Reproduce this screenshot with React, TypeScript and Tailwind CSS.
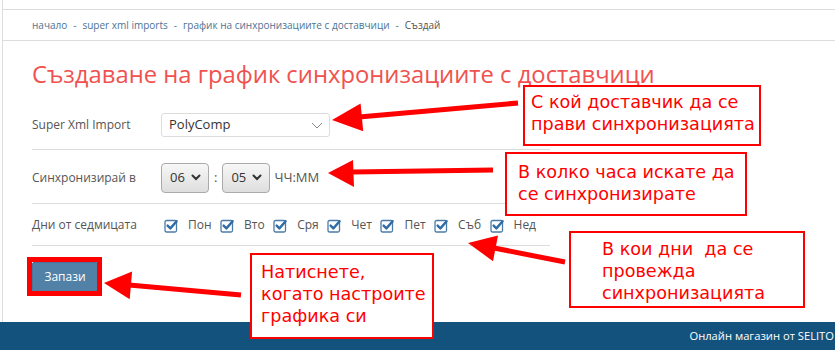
const days = ["Пон", "Вто", "Сря", "Чет", "Пет", "Съб", "Нед"];

function CheckIcon() {
  return (
    <svg width="15" height="15" viewBox="0 0 15 15" className="shrink-0">
      <rect x="1" y="2.5" width="11.5" height="11.5" rx="1.5" fill="#fff" stroke="#4a7ba6" strokeWidth="1.3" />
      <path d="M3.6 7.6 L6.4 10.4 L12.6 3.2" fill="none" stroke="#2f6ca8" strokeWidth="2.4" strokeLinecap="round" strokeLinejoin="round" />
    </svg>
  );
}

function Chevron() {
  return (
    <svg width="10" height="7" viewBox="0 0 10 7">
      <path d="M1.5 1.5 L5 5 L8.5 1.5" fill="none" stroke="#333" strokeWidth="2" strokeLinecap="round" />
    </svg>
  );
}

function TimeSelect({ value }: { value: string }) {
  return (
    <div className="flex h-[30px] w-[48px] items-center justify-between rounded-[4px] border border-[#aaa] bg-gradient-to-b from-[#f7f7f7] to-[#dedede] pl-[8px] pr-[7px] text-[13px] text-[#333]">
      <span>{value}</span>
      <Chevron />
    </div>
  );
}

type Note = { id: string; cls: string; lines: string[] };

function Arrows() {
  const heads = [
    { line: "M359 117 L518 103", head: "332,120 360.6,103.4 363.2,131.2" },
    { line: "M352 172 L493 170", head: "328,173 353,160 354,187" },
    { line: "M494 248 L565 262", head: "468,243 498,235.6 493,261.2" },
    { line: "M129 285 L241 295", head: "104,283 132.1,271.4 129.7,299.2" },
  ];
  return (
    <svg className="pointer-events-none absolute inset-0" width="835" height="350">
      {heads.map((a) => (
        <g key={a.head}>
          <path d={a.line} stroke="#f00" strokeWidth="5" />
          <polygon points={a.head} fill="#f00" />
        </g>
      ))}
    </svg>
  );
}

export default function App() {
  const notes: Note[] = [
    { id: "1", cls: "left-[523px] top-[85px] h-[61px] w-[238px] pl-[6px] pt-[4px]", lines: ["С кой доставчик да се", "прави синхронизацията"] },
    { id: "2", cls: "left-[505px] top-[152px] h-[64px] w-[242px] pl-[11px] pt-[7px]", lines: ["В колко часа искате да", "се синхронизирате"] },
    { id: "3", cls: "left-[569px] top-[231px] h-[77px] w-[236px] pl-[31px] pt-[5px]", lines: ["В кои дни\u00a0 да се", "провежда", "синхронизацията"] },
    { id: "4", cls: "left-[250px] top-[253px] h-[86px] w-[184px] pl-[9px] pt-[6px]", lines: ["Натиснете,", "когато настроите", "графика си"] },
  ];

  return (
    <div className="relative h-[350px] w-[835px] overflow-hidden bg-white font-['Open_Sans',sans-serif]">
      <div className="ml-[2px] h-[322px] border-l border-[#ddd] pt-[9px]">
        <div className="flex h-[32px] items-center border-y border-[#ddd] pl-[29px] text-[10px] text-[#4e7394]">
          <span>начало</span>
          <span className="mx-[6px]">-</span>
          <span>super xml imports</span>
          <span className="mx-[6px]">-</span>
          <span>график на синхронизациите с доставчици</span>
          <span className="mx-[6px]">-</span>
          <span className="text-[#555]">Създай</span>
        </div>

        <div className="pl-[29px]">
          <h1 className="mt-[18px] h-[45px] text-[23.8px] font-normal leading-[30px] text-[#f0524f]">
            Създаване на график синхронизациите с доставчици
          </h1>

          <div className="w-[518px] text-[12px] text-[#555]">
            <div className="flex h-[46px] items-center border-b border-[#ddd] pb-[3px]">
              <span className="w-[129px]">Super Xml Import</span>
              <div className="flex h-[24px] w-[169px] items-center justify-between rounded-[3px] border border-[#ddd] pl-[7px] pr-[6px] text-[13px] text-[#333]">
                <span>PolyComp</span>
                <svg width="12" height="7" viewBox="0 0 12 7">
                  <path d="M1 1 L6 6 L11 1" fill="none" stroke="#888" strokeWidth="1" />
                </svg>
              </div>
            </div>

            <div className="flex h-[54px] items-center border-b border-[#ddd] pt-[2px]">
              <span className="w-[129px]">Синхронизирай в</span>
              <TimeSelect value="06" />
              <span className="mx-[5px] text-[13px]">:</span>
              <TimeSelect value="05" />
              <span className="ml-[4px] text-[13px]">ЧЧ:ММ</span>
            </div>

            <div className="flex h-[42px] items-center border-b border-[#ddd] pt-[1px]">
              <span className="w-[132px]">Дни от седмицата</span>
              <div className="flex items-center gap-x-[8.5px]">
                {days.map((d) => (
                  <label key={d} className="flex items-center gap-x-[9px]">
                    <CheckIcon />
                    <span>{d}</span>
                  </label>
                ))}
              </div>
            </div>
          </div>

          <button className="mt-[16px] h-[30px] w-[66px] rounded-[2px] border border-[#4a7397] bg-[#5281a8] text-[12px] text-white">
            Запази
          </button>
        </div>
      </div>

      <footer className="flex h-[28px] justify-end bg-[#14527e] pt-[6px] text-[11.2px] text-white">
        <span className="mr-[1px]">Онлайн магазин от SELITO</span>
      </footer>

      <div className="pointer-events-none absolute left-[27px] top-[257px] h-[39px] w-[75px] border-[5px] border-[#f00]" />

      <Arrows />

      {notes.map((n) => (
        <div
          key={n.id}
          className={`absolute border-2 border-[#f00] bg-white font-['DejaVu_Sans',sans-serif] text-[17.6px] leading-[22px] text-[#f00] ${n.cls}`}
        >
          {n.lines.map((l) => (
            <div key={l} className="whitespace-pre">{l}</div>
          ))}
        </div>
      ))}
    </div>
  );
}
